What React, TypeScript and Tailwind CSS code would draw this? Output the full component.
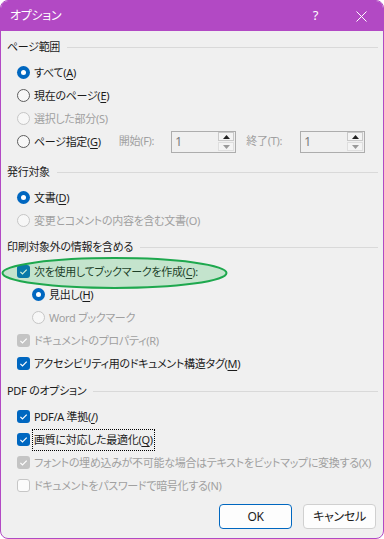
import React from "react";

const FONT = "[font-family:'Noto_Sans','Noto_Sans_CJK_JP',sans-serif] [font-feature-settings:'palt'] tracking-[-0.3px]";

function Radio({ checked, disabled }: { checked?: boolean; disabled?: boolean }) {
  if (checked)
    return (
      <span className="flex h-[13px] w-[13px] shrink-0 items-center justify-center rounded-full bg-[#0067c0]">
        <span className="h-[5px] w-[5px] rounded-full bg-white" />
      </span>
    );
  return (
    <span
      className={
        "h-[13px] w-[13px] shrink-0 rounded-full border bg-[#f7f7f7] " +
        (disabled ? "border-[#c6c6c6]" : "border-[#5d5d5d]")
      }
    />
  );
}

function Check({ checked, disabled }: { checked?: boolean; disabled?: boolean }) {
  if (!checked)
    return <span className="h-[13px] w-[13px] shrink-0 rounded-[3px] border border-[#c6c6c6] bg-[#fbfbfb]" />;
  return (
    <span
      className={
        "flex h-[13px] w-[13px] shrink-0 items-center justify-center rounded-[3px] " +
        (disabled ? "bg-[#c4c4c4]" : "bg-[#0067c0]")
      }
    >
      <svg width="13" height="13" viewBox="0 0 13 13">
        <path d="M3.4 6.9 L5.5 9 L9.7 4.6" fill="none" stroke="white" strokeWidth="1.2" />
      </svg>
    </span>
  );
}

function Label({ text, k, disabled }: { text: string; k?: string; disabled?: boolean }) {
  const color = disabled ? "text-[#a0a0a0]" : "text-[#1b1b1b]";
  if (!k) return <span className={color}>{text}</span>;
  const i = text.indexOf("(" + k + ")");
  return (
    <span className={color}>
      {text.slice(0, i + 1)}
      {disabled ? k : <span className="underline underline-offset-2">{k}</span>}
      {text.slice(i + 2)}
    </span>
  );
}

function Row({
  kind,
  checked,
  disabled,
  text,
  k,
  indent,
  focus,
}: {
  kind: "radio" | "check";
  checked?: boolean;
  disabled?: boolean;
  text: string;
  k?: string;
  indent?: boolean;
  focus?: boolean;
}) {
  return (
    <div className={"flex h-[23px] items-center gap-[3px] whitespace-nowrap " + (indent ? "pl-[25px]" : "pl-[10px]")}>
      {kind === "radio" ? <Radio checked={checked} disabled={disabled} /> : <Check checked={checked} disabled={disabled} />}
      <span className={"px-[1px] leading-[20px] " + (focus ? "outline outline-1 outline-dotted outline-black" : "")}>
        <Label text={text} k={k} disabled={disabled} />
      </span>
    </div>
  );
}

function Header({ text, className }: { text: string; className?: string }) {
  return (
    <div className={"flex h-[20px] items-center gap-[7px] whitespace-nowrap " + (className ?? "")}>
      <span className="text-[#1b1b1b]">{text}</span>
      <span className="h-px flex-1 bg-[#d9d9d9]" />
    </div>
  );
}

function Spin() {
  return (
    <div className="flex h-[22px] w-[65px] items-center justify-between border border-[#adadad] bg-[#f0f0f0] pl-[3px] pr-[1px]">
      <span className="text-[12px] text-[#7a7a7a]">1</span>
      <div className="flex flex-col gap-px">
        <span className="flex h-[9px] w-[16px] items-center justify-center border border-[#c9c9c9] bg-[#f4f4f4]">
          <svg width="7" height="4" viewBox="0 0 7 4"><path d="M0 4 L3.5 0 L7 4Z" fill="#222" /></svg>
        </span>
        <span className="flex h-[9px] w-[16px] items-center justify-center border border-[#dedede] bg-[#f4f4f4]">
          <svg width="7" height="4" viewBox="0 0 7 4"><path d="M0 0 L3.5 4 L7 0Z" fill="#9a9a9a" /></svg>
        </span>
      </div>
    </div>
  );
}

export default function App() {
  return (
    <div className={"h-[539px] w-[384px] bg-white text-[11px] " + FONT}>
      <div className="relative flex h-full flex-col overflow-hidden rounded-[8px] border border-[#b249c4] bg-[#f0f0f0]">
        <div className="flex h-[30px] shrink-0 items-center bg-[#b249c4] pl-[9px] text-white">
          <span className="flex-1 text-[12px]">オプション</span>
          <span className="mr-[38px] text-[13px]">?</span>
          <svg className="mr-[16px]" width="11" height="11" viewBox="0 0 11 11">
            <path d="M0.5 0.5 L10.5 10.5 M10.5 0.5 L0.5 10.5" stroke="white" strokeWidth="1" />
          </svg>
        </div>

        <div className="flex flex-1 flex-col pl-[6px] pr-[5px] pt-[6px]">
          <Header text="ページ範囲" />
          <div className="mt-[4px]">
            <Row kind="radio" checked text="すべて(A)" k="A" />
            <Row kind="radio" text="現在のページ(E)" k="E" />
            <Row kind="radio" disabled text="選択した部分(S)" k="S" />
            <div className="flex h-[23px] items-center whitespace-nowrap">
              <Row kind="radio" text="ページ指定(G)" k="G" />
              <span className="ml-[17px] text-[#a0a0a0]">開始(F):</span>
              <span className="ml-[17px]">
                <Spin />
              </span>
              <span className="ml-[10px] text-[#a0a0a0]">終了(T):</span>
              <span className="ml-[18px]">
                <Spin />
              </span>
            </div>
          </div>

          <Header text="発行対象" className="mt-[9px]" />
          <div className="mt-[4px]">
            <Row kind="radio" checked text="文書(D)" k="D" />
            <Row kind="radio" disabled text="変更とコメントの内容を含む文書(O)" k="O" />
          </div>

          <Header text="印刷対象外の情報を含める" className="mt-[5px]" />
          <div className="mt-[3px]">
            <Row kind="check" checked text="次を使用してブックマークを作成(C):" k="C" />
            <Row kind="radio" checked indent text="見出し(H)" k="H" />
            <Row kind="radio" disabled indent text="Word ブックマーク" />
            <Row kind="check" checked disabled text="ドキュメントのプロパティ(R)" k="R" />
            <Row kind="check" checked text="アクセシビリティ用のドキュメント構造タグ(M)" k="M" />
          </div>

          <Header text="PDF のオプション" className="mt-[6px]" />
          <div className="mt-[4px]">
            <Row kind="check" checked text="PDF/A 準拠(/)" k="/" />
            <Row kind="check" checked focus text="画質に対応した最適化(Q)" k="Q" />
            <Row kind="check" checked disabled text="フォントの埋め込みが不可能な場合はテキストをビットマップに変換する(X)" k="X" />
            <Row kind="check" disabled text="ドキュメントをパスワードで暗号化する(N)" k="N" />
          </div>

          <div className="mt-[7px] flex justify-end gap-[11px] pr-[2px]">
            <button className="h-[25px] w-[73px] rounded-[4px] border border-[#0067c0] bg-[#fdfdfd] text-[12px] text-[#1b1b1b]">OK</button>
            <button className="h-[25px] w-[73px] rounded-[4px] border border-[#d0d0d0] bg-[#fdfdfd] text-[12px] text-[#1b1b1b]">キャンセル</button>
          </div>
        </div>

        <svg className="pointer-events-none absolute left-0 top-[256px]" width="230" height="34" viewBox="0 0 230 34">
          <ellipse cx="113.5" cy="16" rx="112" ry="15" fill="rgba(40,185,80,0.22)" stroke="#1ea84e" strokeWidth="2" />
        </svg>
      </div>
    </div>
  );
}
